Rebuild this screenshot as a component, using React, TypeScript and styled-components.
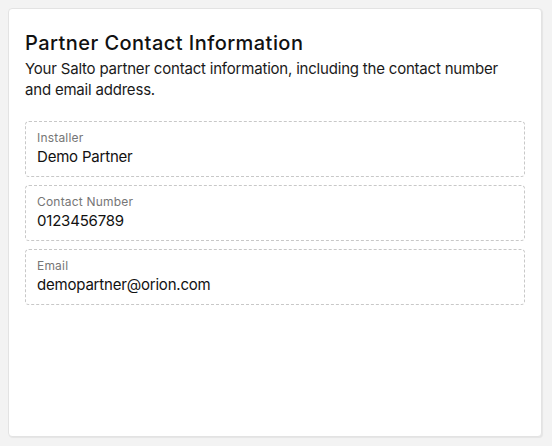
import React from 'react';
import styled, { createGlobalStyle } from 'styled-components';

const GlobalStyle = createGlobalStyle`
  html, body {
    margin: 0;
    background: #f3f3f3;
  }
  body {
    padding: 8px;
    font-family: Inter, "Liberation Sans", sans-serif;
    color: #111;
  }
`

const Card = styled.section`
  box-sizing: border-box;
  width: 534px;
  height: 429px;
  background: #fff;
  border: 1px solid #e3e3e3;
  border-radius: 4px;
  box-shadow: 1px 1px 1px rgba(0, 0, 0, 0.06);
  padding: 21px 16px 16px 16px;
`

const Title = styled.h2`
  margin: 0;
  font-size: 20px;
  font-weight: 500;
  line-height: 26px;
  letter-spacing: 0.45px;
`

const Description = styled.p`
  margin: 2px 0 0 0;
  font-size: 15px;
  line-height: 21px;
  letter-spacing: -0.2px;
  color: #1a1a1a;
`

const Fields = styled.div`
  display: flex;
  flex-direction: column;
  gap: 8px;
  margin-top: 21px;
`

const Field = styled.div`
  box-sizing: border-box;
  height: 56px;
  border: 1px dashed #c8c8c8;
  border-radius: 4px;
  padding: 8px 11px;
  display: flex;
  flex-direction: column;
`

const Label = styled.span`
  font-size: 12px;
  line-height: 16px;
  letter-spacing: 0.2px;
  color: #767676;
`

const Value = styled.span`
  font-size: 15px;
  line-height: 22px;
  letter-spacing: -0.2px;
  color: #111;
`

const fields = [
  { label: 'Installer', value: 'Demo Partner' },
  { label: 'Contact Number', value: '0123456789' },
  { label: 'Email', value: 'demopartner@orion.com' },
];

const App = () => {
  return (
    <>
      <GlobalStyle />
      <Card>
        <Title>Partner Contact Information</Title>
        <Description>
          Your Salto partner contact information, including the contact number and email address.
        </Description>
        <Fields>
          {fields.map((f) => (
            <Field key={f.label}>
              <Label>{f.label}</Label>
              <Value>{f.value}</Value>
            </Field>
          ))}
        </Fields>
      </Card>
    </>
  );
};

export default App;
